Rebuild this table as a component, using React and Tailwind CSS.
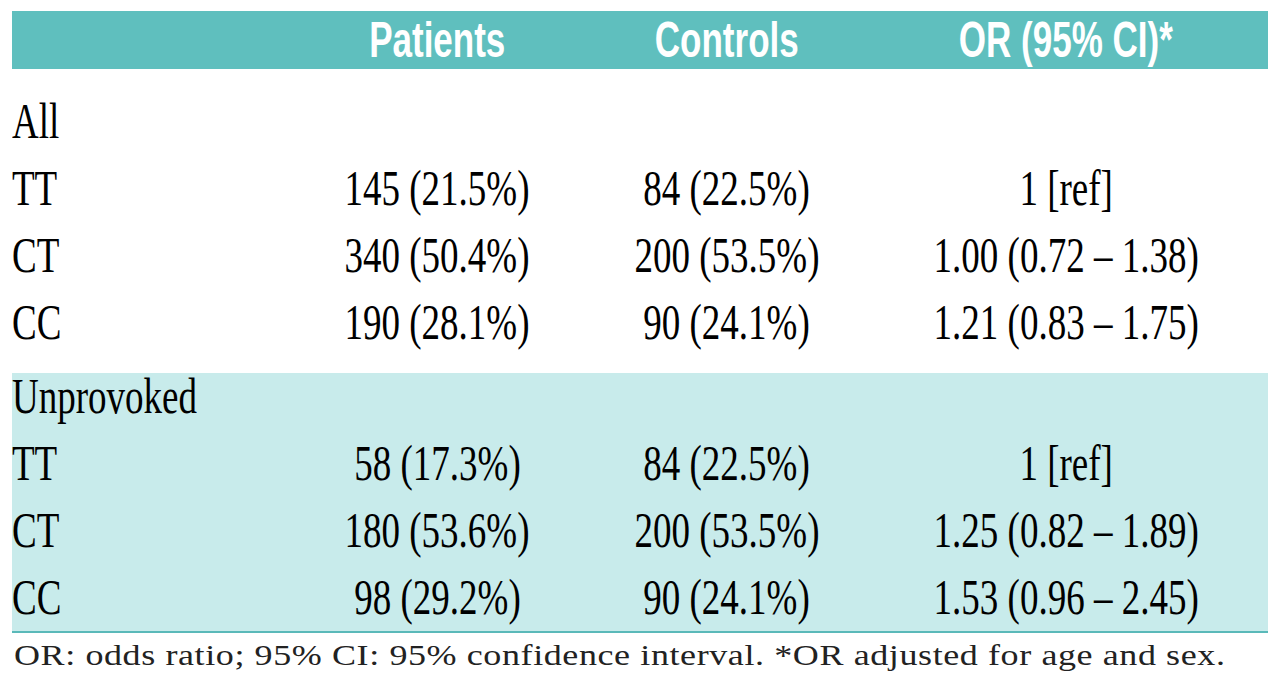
import React from 'react';

const allRows = [
    { label: 'TT', patients: '145 (21.5%)', controls: '84 (22.5%)', or: '1 [ref]' },
    { label: 'CT', patients: '340 (50.4%)', controls: '200 (53.5%)', or: '1.00 (0.72 – 1.38)' },
    { label: 'CC', patients: '190 (28.1%)', controls: '90 (24.1%)', or: '1.21 (0.83 – 1.75)' },
];

const unprovokedRows = [
    { label: 'TT', patients: '58 (17.3%)', controls: '84 (22.5%)', or: '1 [ref]' },
    { label: 'CT', patients: '180 (53.6%)', controls: '200 (53.5%)', or: '1.25 (0.82 – 1.89)' },
    { label: 'CC', patients: '98 (29.2%)', controls: '90 (24.1%)', or: '1.53 (0.96 – 2.45)' },
];

const grid = 'grid grid-cols-[278px_294px_285px_394px]';

const HeadCell = ({ children }) => (
    <div className="text-center whitespace-nowrap">
        <span className="inline-block scale-x-[0.7]">{children}</span>
    </div>
);

const Cell = ({ children, left }) => (
    <div className={left ? 'text-left whitespace-nowrap' : 'text-center whitespace-nowrap'}>
        <span className={left ? 'inline-block scale-x-[0.74] origin-left' : 'inline-block scale-x-[0.74]'}>
            {children}
        </span>
    </div>
);

const Row = ({ row }) => (
    <div className={`${grid} h-[67px] leading-[67px]`}>
        <Cell left>{row.label}</Cell>
        <Cell>{row.patients}</Cell>
        <Cell>{row.controls}</Cell>
        <Cell>{row.or}</Cell>
    </div>
);

const App = () => {
    return (
        <div className="w-[1280px] h-[697px] bg-white pt-[11px] px-[12px] overflow-hidden">
            {/* Header */}
            <div
                className={`${grid} h-[58px] leading-[58px] bg-[#5fbfbe] text-white font-bold text-[50px]`}
                style={{ fontFamily: '"Liberation Sans", Arial, sans-serif' }}
            >
                <div />
                <HeadCell>Patients</HeadCell>
                <HeadCell>Controls</HeadCell>
                <HeadCell>OR (95% CI)*</HeadCell>
            </div>

            <div
                className="text-[50px] text-black"
                style={{ fontFamily: '"Liberation Serif", "Times New Roman", serif' }}
            >
                {/* All */}
                <div className="mt-[19px]">
                    <div className={`${grid} h-[67px] leading-[67px]`}>
                        <Cell left>All</Cell>
                    </div>
                    {allRows.map((row) => (
                        <Row key={'a' + row.label} row={row} />
                    ))}
                </div>

                {/* Unprovoked */}
                <div className="mt-[17px] bg-[#c8ebeb] border-b-2 border-[#5ab9b9]">
                    <div className={`${grid} h-[57px] leading-[47px]`}>
                        <Cell left>Unprovoked</Cell>
                    </div>
                    {unprovokedRows.map((row) => (
                        <Row key={'u' + row.label} row={row} />
                    ))}
                </div>
            </div>

            <p
                className="mt-[4px] pl-[2px] text-[30px] leading-[36px] tracking-[0.5px] text-[#222] whitespace-nowrap"
                style={{ fontFamily: '"Liberation Serif", "Times New Roman", serif' }}
            >
                <span className="inline-block scale-x-[1.2] origin-left">
                    OR: odds ratio; 95% CI: 95% confidence interval. *OR adjusted for age and sex.
                </span>
            </p>
        </div>
    );
};

export default App;
